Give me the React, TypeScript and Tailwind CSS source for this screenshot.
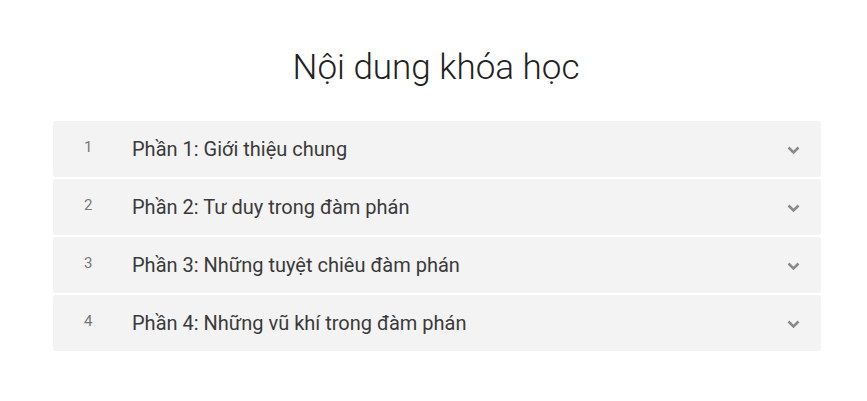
import React from "react";

const items = [
  "Phần 1: Giới thiệu chung",
  "Phần 2: Tư duy trong đàm phán",
  "Phần 3: Những tuyệt chiêu đàm phán",
  "Phần 4: Những vũ khí trong đàm phán",
];

function Chevron() {
  return (
    <svg width="13" height="9" viewBox="0 0 13 9" className="block">
      <path d="M1.5 1.5 L6.5 6.5 L11.5 1.5" fill="none" stroke="#8a8a8a" strokeWidth="2.6" />
    </svg>
  );
}

export default function App() {
  return (
    <div className="w-[867px] h-[401px] bg-white font-['Roboto',sans-serif]">
      <div className="pt-[45px] pl-[5px] text-center text-[35px] leading-[45px] font-light text-[#222]">
        Nội dung khóa học
      </div>
      <div className="mt-[31px] ml-[53px] w-[768px] flex flex-col gap-[2px]">
        {items.map((t, i) => (
          <div key={i} className="h-[56px] rounded-[3px] bg-[#f3f3f3] flex items-center">
            <div className="w-[79px] pl-[31px] self-start pt-[17px] text-[15px] leading-[18px] text-[#777]">
              {i + 1}
            </div>
            <div className="flex-1 text-[20px] leading-[26px] font-normal text-[#3a3a3a] pb-[1px]">{t}</div>
            <div className="pr-[21px] pt-[2px]">
              <Chevron />
            </div>
          </div>
        ))}
      </div>
    </div>
  );
}
